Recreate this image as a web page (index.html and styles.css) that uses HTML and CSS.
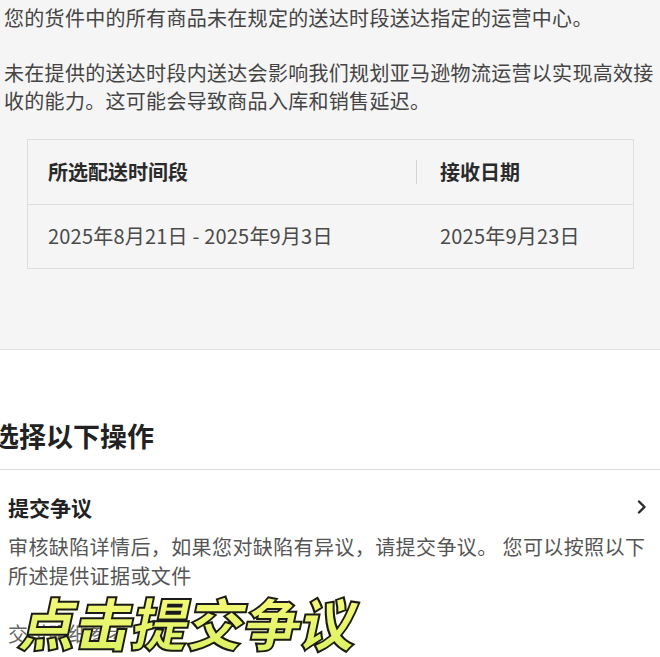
FILE: index.html
```html
<!DOCTYPE html>
<html lang="zh-CN">
<head>
  <meta charset="UTF-8">
  <meta name="viewport" content="width=device-width, initial-scale=1.0">
  <title>提交争议</title>
  <link rel="stylesheet" href="styles.css">
</head>
<body>
  <section class="notice">
    <p class="notice-text">您的货件中的所有商品未在规定的送达时段送达指定的运营中心。</p>
    <p class="notice-text spaced">未在提供的送达时段内送达会影响我们规划亚马逊物流运营以实现高效接收的能力。这可能会导致商品入库和销售延迟。</p>

    <div class="slot-table">
      <div class="slot-row slot-head">
        <div class="slot-cell first">所选配送时间段</div>
        <span class="col-divider"></span>
        <div class="slot-cell second">接收日期</div>
      </div>
      <div class="slot-row">
        <div class="slot-cell first">2025年8月21日 - 2025年9月3日</div>
        <span class="col-gap"></span>
        <div class="slot-cell second">2025年9月23日</div>
      </div>
    </div>
  </section>

  <section class="actions">
    <h2 class="actions-title">选择以下操作</h2>

    <div class="action-item">
      <div class="action-head">
        <h3>提交争议</h3>
        <svg class="chevron" width="12" height="16" viewBox="0 0 12 16">
          <path d="M3 2.5 L8.5 8 L3 13.5" fill="none" stroke="#2a2a2a" stroke-width="2.4" stroke-linecap="round" stroke-linejoin="round"/>
        </svg>
      </div>
      <p class="action-desc">审核缺陷详情后，如果您对缺陷有异议，请提交争议。 您可以按照以下所述提供证据或文件</p>
      <p class="action-sub">交付明细参考</p>
    </div>

    <div class="caption">点击提交争议</div>
  </section>
</body>
</html>
```

FILE: styles.css
```css
body {
  margin: 0;
  font-family: "Noto Sans CJK SC", "Noto Sans", sans-serif;
  color: #3d3d3d;
  background: #fff;
  overflow: hidden;
}
p, h2, h3 {
  margin: 0;
}
.notice {
  background-color: #f5f5f5;
  padding: 4px 0 80px 4px;
  border-bottom: 1px solid #e2e2e2;
}
.notice-text {
  font-size: 20px;
  line-height: 28px;
  color: #444;
  letter-spacing: 0.3px;
}
.notice-text.spaced {
  margin-top: 27px;
}
.slot-table {
  margin: 24px 26px 0 23px;
  border: 1px solid #dedede;
}
.slot-row {
  display: flex;
  align-items: center;
}
.slot-head {
  border-bottom: 1px solid #dedede;
  font-weight: bold;
  color: #2a2a2a;
}
.slot-cell {
  font-size: 20px;
  line-height: 28px;
  padding: 18px 0;
}
.slot-cell.first {
  width: 368px;
  padding-left: 20px;
}
.slot-cell.second {
  padding-left: 23px;
}
.slot-row:not(.slot-head) .slot-cell {
  padding: 17px 0 18px;
  color: #4a4a4a;
  letter-spacing: 0.2px;
}
.slot-row:not(.slot-head) .slot-cell.first {
  padding-left: 20px;
}
.slot-row:not(.slot-head) .slot-cell.second {
  padding-left: 23px;
}
.col-divider,
.col-gap {
  width: 1px;
  height: 24px;
  background: #d4d4d4;
}
.col-gap {
  background: transparent;
}
.actions {
  position: relative;
  box-sizing: border-box;
  height: 306px;
  overflow: hidden;
  padding-top: 68px;
}
.actions-title {
  font-size: 27px;
  line-height: 36px;
  font-weight: bold;
  color: #222;
  margin-left: -8px;
  padding-bottom: 15px;
  border-bottom: 1px solid #dcdcdc;
}
.action-item {
  padding: 22px 6px 0 8px;
}
.action-head {
  display: flex;
  justify-content: space-between;
  align-items: center;
}
.action-head h3 {
  font-size: 21px;
  line-height: 30px;
  font-weight: bold;
  color: #222;
}
.chevron {
  margin-right: 6px;
}
.action-desc {
  margin-top: 10px;
  font-size: 20px;
  line-height: 29px;
  color: #555;
  letter-spacing: 0.4px;
}
.action-sub {
  margin-top: 29px;
  font-size: 20px;
  line-height: 29px;
  color: #666;
}
.caption {
  position: absolute;
  left: 22px;
  top: 238px;
  font-family: "Noto Sans CJK SC", sans-serif;
  font-size: 57px;
  font-weight: 900;
  line-height: 66px;
  letter-spacing: -1px;
  transform: skewX(-12deg);
  background: linear-gradient(180deg, #f8fa7a 0%, #dcf163 100%);
  -webkit-background-clip: text;
  background-clip: text;
  -webkit-text-fill-color: transparent;
  -webkit-text-stroke: 2px #1a1a1a;
  paint-order: stroke fill;
}
```
